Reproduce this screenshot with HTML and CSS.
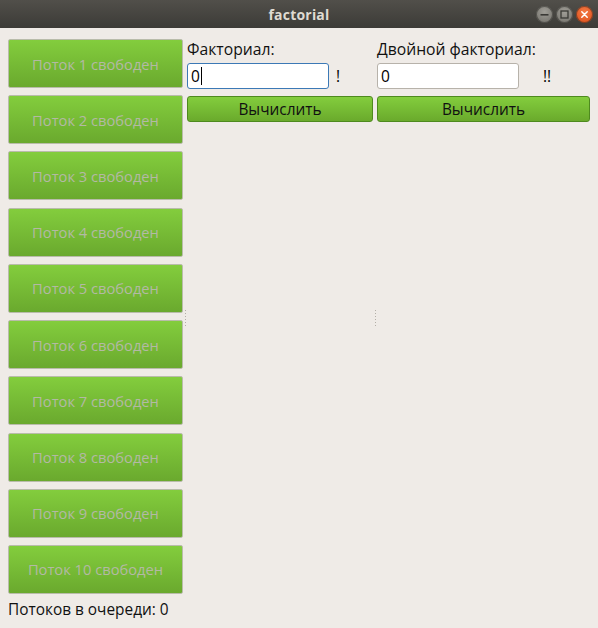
FILE: index.html
```html
<!DOCTYPE html>
<html lang="ru">
<head>
<meta charset="utf-8">
<title>factorial</title>
<link rel="stylesheet" href="styles.css">
</head>
<body>
<div class="window">
  <header class="titlebar">
    <span class="title">factorial</span>
    <div class="controls">
      <span class="ctl ctl-min"><svg width="17" height="17" viewBox="0 0 17 17"><rect x="4.5" y="8" width="8" height="1.6" fill="#3a3935"/></svg></span>
      <span class="ctl ctl-max"><svg width="17" height="17" viewBox="0 0 17 17"><rect x="5" y="5" width="7" height="7" fill="none" stroke="#3a3935" stroke-width="1.3"/></svg></span>
      <span class="ctl ctl-close"><svg width="17" height="17" viewBox="0 0 17 17"><path d="M5.8 5.8 L11.2 11.2 M11.2 5.8 L5.8 11.2" stroke="#fff" stroke-width="1.5" stroke-linecap="round"/></svg></span>
    </div>
  </header>
  <main class="content">
    <div class="splitter">
      <div class="threads">
        <button class="thread">Поток 1 свободен</button>
        <button class="thread">Поток 2 свободен</button>
        <button class="thread">Поток 3 свободен</button>
        <button class="thread">Поток 4 свободен</button>
        <button class="thread">Поток 5 свободен</button>
        <button class="thread">Поток 6 свободен</button>
        <button class="thread">Поток 7 свободен</button>
        <button class="thread">Поток 8 свободен</button>
        <button class="thread">Поток 9 свободен</button>
        <button class="thread">Поток 10 свободен</button>
      </div>
      <div class="handle"><span class="dots"><i></i><i></i><i></i><i></i><i></i><i></i></span></div>
      <section class="calc calc-single">
        <div class="label">Факториал:</div>
        <div class="input-row">
          <div class="input focused">0<span class="caret"></span></div>
          <span class="mark mark-single">!</span>
        </div>
        <button class="compute">Вычислить</button>
      </section>
      <div class="handle"><span class="dots"><i></i><i></i><i></i><i></i><i></i><i></i></span></div>
      <section class="calc calc-double">
        <div class="label">Двойной факториал:</div>
        <div class="input-row">
          <div class="input">0</div>
          <span class="mark mark-double">!!</span>
        </div>
        <button class="compute">Вычислить</button>
      </section>
    </div>
    <div class="status">Потоков в очереди: 0</div>
  </main>
</div>
</body>
</html>
```
FILE: styles.css
```css
* { box-sizing: border-box; }
html, body {
  margin: 0;
  padding: 0;
  width: 598px;
  height: 628px;
  overflow: hidden;
  background: #efebe7;
  font-family: "Open Sans", "DejaVu Sans", sans-serif;
  font-size: 14.5px;
  color: #111;
}
.window {
  display: flex;
  flex-direction: column;
  height: 628px;
}
.titlebar {
  position: relative;
  height: 28px;
  flex: none;
  background: linear-gradient(#514f4a, #3c3b37);
  display: flex;
  align-items: center;
  justify-content: center;
}
.title {
  color: #dfdbd2;
  font-weight: bold;
  font-size: 14px;
  letter-spacing: 0.2px;
}
.controls {
  position: absolute;
  right: 5px;
  top: 6px;
  display: flex;
  gap: 3px;
}
.ctl {
  width: 17px;
  height: 17px;
  border-radius: 50%;
  display: flex;
  background: radial-gradient(circle at 50% 35%, #a09e97, #6e6c66);
  box-shadow: inset 0 0 0 1px rgba(40,40,36,0.5);
}
.ctl-close {
  background: radial-gradient(circle at 50% 35%, #f47a45, #db4a15);
}
.content {
  flex: 1;
  display: flex;
  flex-direction: column;
  padding: 11px 8px 0 8px;
}
.splitter {
  height: 559px;
  display: flex;
}
.threads {
  width: 175px;
  display: flex;
  flex-direction: column;
  gap: 7.22px;
}
.thread {
  height: 49px;
  flex: none;
  margin: 0;
  padding: 0;
  border: 1px solid #b9bcaa;
  border-radius: 2px;
  background: linear-gradient(#83cd3d, #6aa92e);
  color: #b3b9a4;
  font: inherit;
  font-size: 14.7px;
}
.handle {
  width: 4px;
  flex: none;
  display: flex;
  align-items: center;
  justify-content: center;
}
.dots {
  display: flex;
  flex-direction: column;
  gap: 2px;
  margin-top: -2px;
}
.dots i {
  display: block;
  width: 1px;
  height: 1px;
  background: #b3afa7;
}
.calc {
  display: flex;
  flex-direction: column;
}
.calc-single { width: 186px; }
.calc-double { width: 213px; }
.label {
  height: 20px;
  line-height: 18px;
  margin-top: 1px;
  font-size: 15.7px;
}
.input-row {
  display: flex;
  align-items: center;
  margin-top: 3px;
  height: 26px;
}
.input {
  width: 142px;
  height: 26px;
  border: 1px solid #b7b2aa;
  border-radius: 3px;
  background: #fff;
  padding: 0 0 0 3px;
  display: flex;
  align-items: center;
  font-size: 15.5px;
  color: #000;
}
.input.focused {
  border-color: #3c79b6;
}
.caret {
  display: inline-block;
  width: 1px;
  height: 18px;
  background: #000;
  margin-left: 1px;
}
.mark {
  font-size: 15.5px;
  color: #000;
}
.mark-single { margin-left: 7px; }
.mark-double { margin-left: 24px; }
.compute {
  margin: 7px 0 0 0;
  height: 26px;
  padding: 0;
  border: 1px solid #4e8a1e;
  border-radius: 3px;
  background: linear-gradient(#83cd3d, #6aaa2c);
  color: #111;
  font: inherit;
  font-size: 15.4px;
}
.status {
  margin-top: 2px;
  height: 20px;
  line-height: 20px;
  font-size: 15.4px;
}
```
